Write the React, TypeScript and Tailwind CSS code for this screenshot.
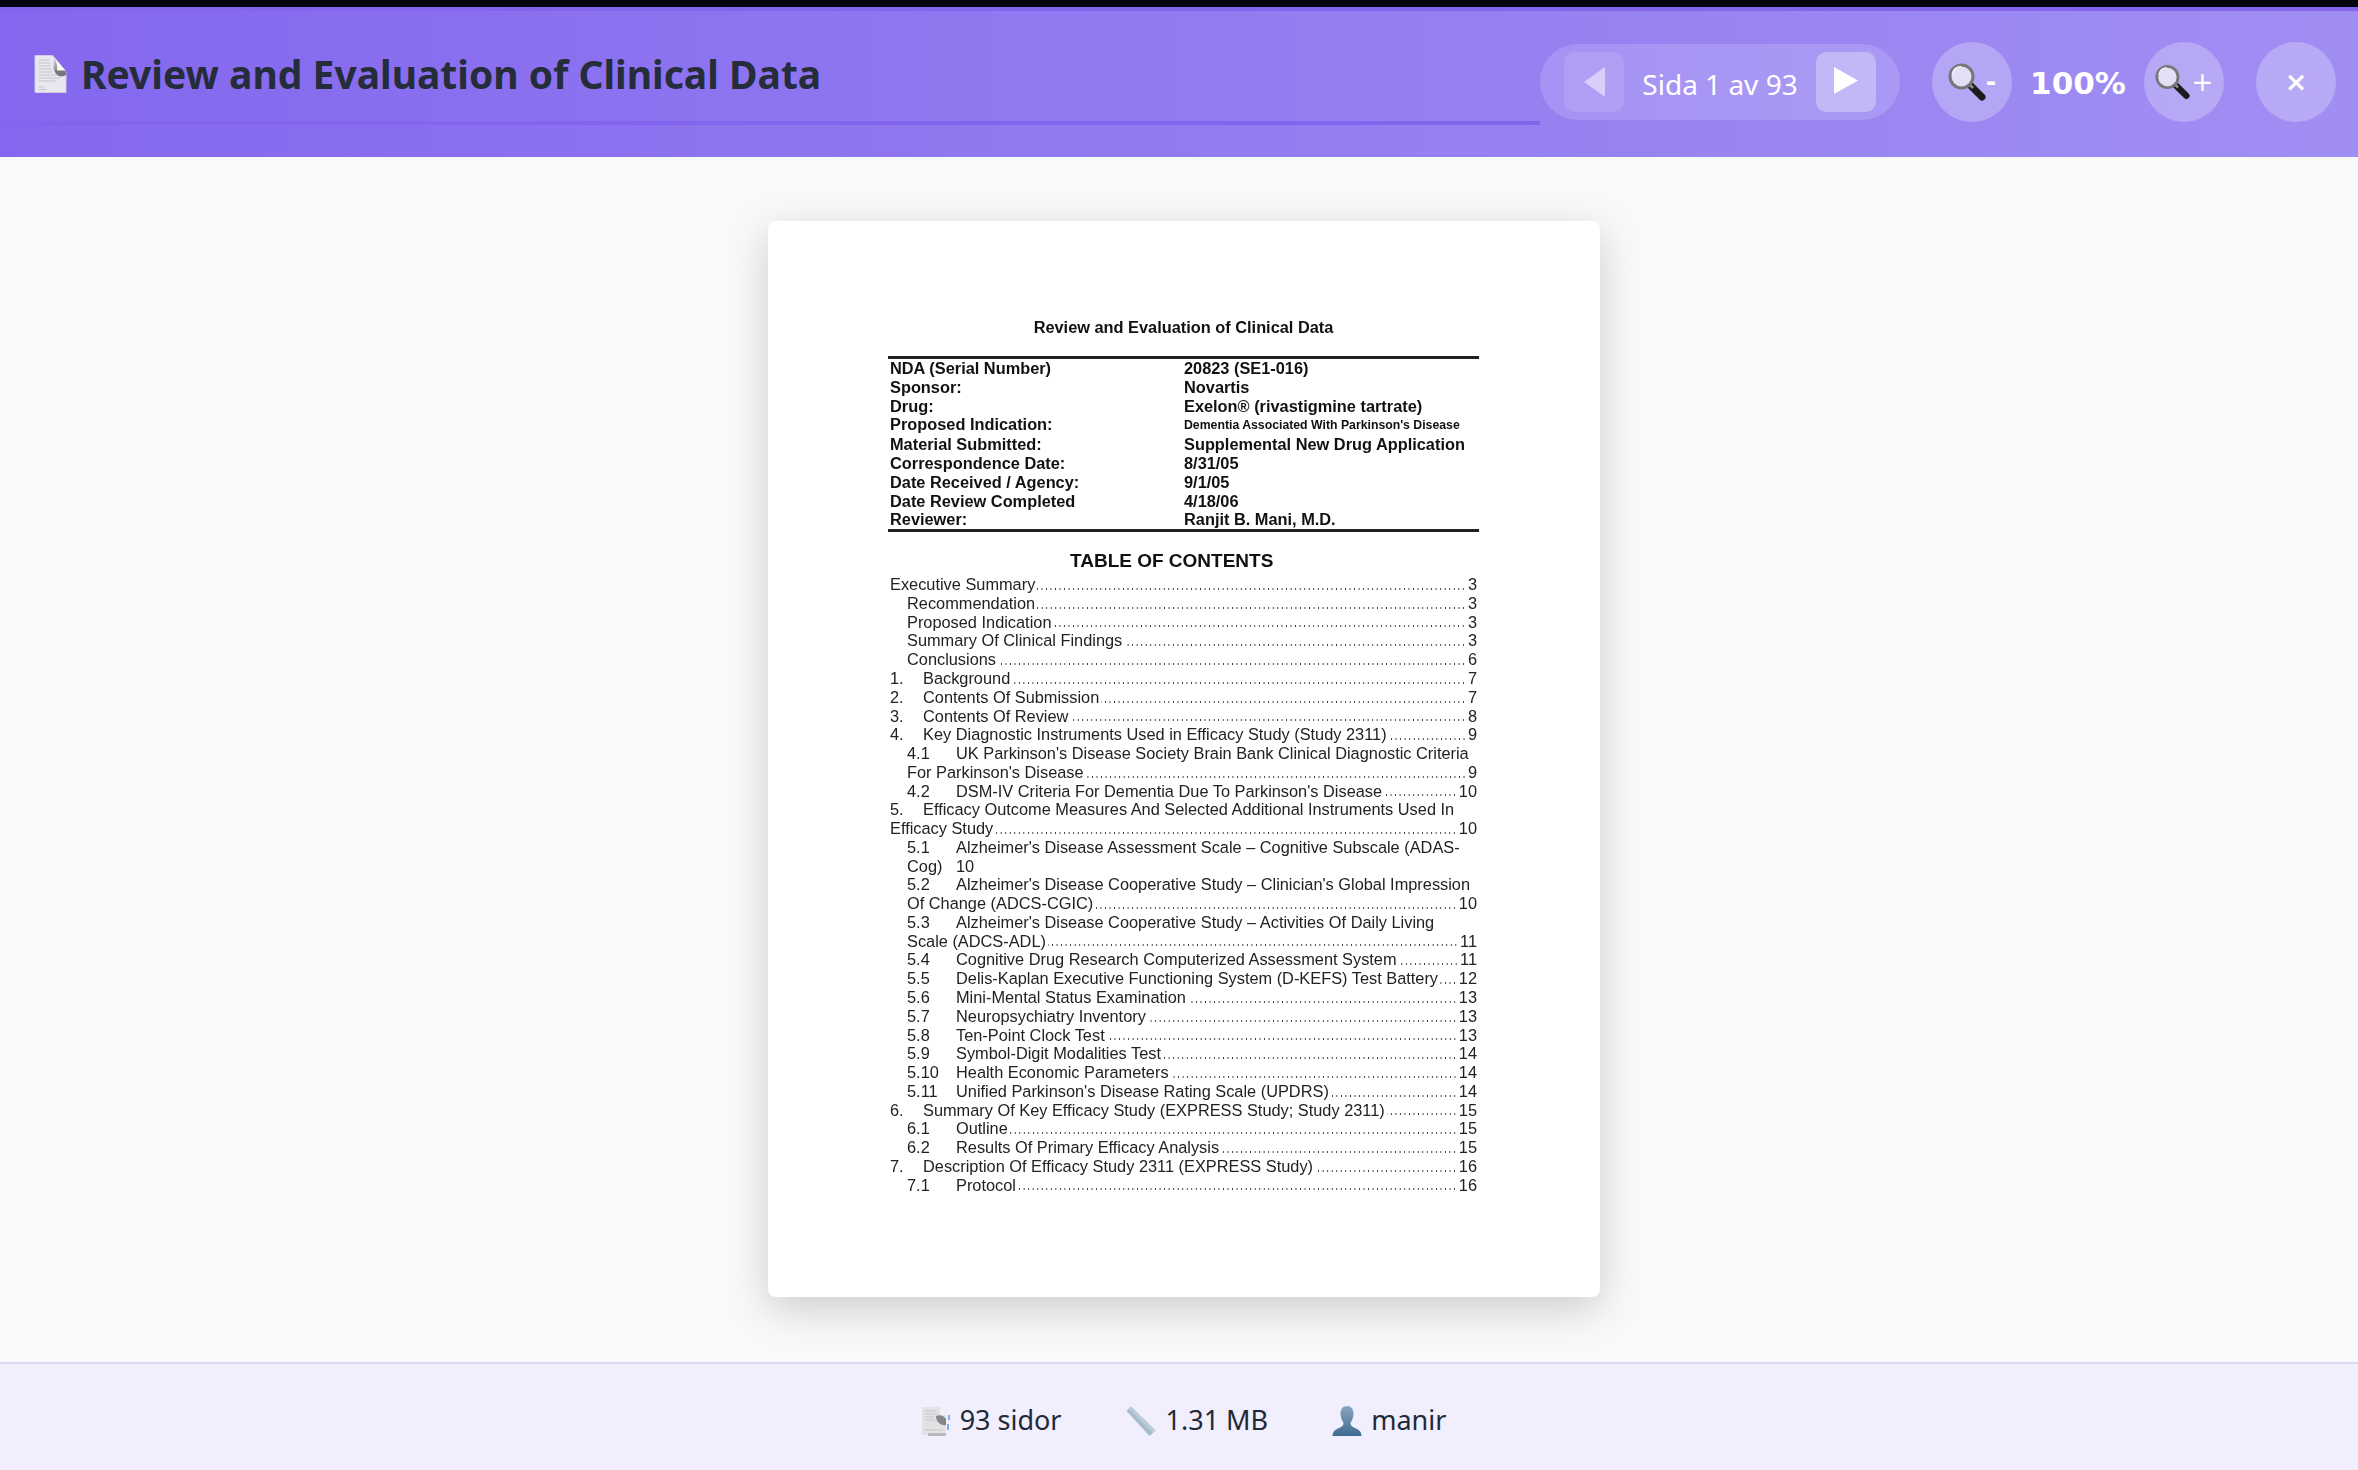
const meta = [
  ["NDA (Serial Number)", "20823 (SE1-016)"],
  ["Sponsor:", "Novartis"],
  ["Drug:", "Exelon® (rivastigmine tartrate)"],
  ["Proposed Indication:", "Dementia Associated With Parkinson's Disease"],
  ["Material Submitted:", "Supplemental New Drug Application"],
  ["Correspondence Date:", "8/31/05"],
  ["Date Received / Agency:", "9/1/05"],
  ["Date Review Completed", "4/18/06"],
  ["Reviewer:", "Ranjit B. Mani, M.D."],
];

type TocRow = { level: 0 | 1 | 2 | 3; num?: string; text: string; page?: string };

// level 0: flush left, 1: indented, 2: numbered chapter, 3: numbered sub section
const toc: TocRow[] = [
  { level: 0, text: "Executive Summary", page: "3" },
  { level: 1, text: "Recommendation", page: "3" },
  { level: 1, text: "Proposed Indication", page: "3" },
  { level: 1, text: "Summary Of Clinical Findings", page: "3" },
  { level: 1, text: "Conclusions", page: "6" },
  { level: 2, num: "1.", text: "Background", page: "7" },
  { level: 2, num: "2.", text: "Contents Of Submission", page: "7" },
  { level: 2, num: "3.", text: "Contents Of Review", page: "8" },
  { level: 2, num: "4.", text: "Key Diagnostic Instruments Used in Efficacy Study (Study 2311)", page: "9" },
  { level: 3, num: "4.1", text: "UK Parkinson's Disease Society Brain Bank Clinical Diagnostic Criteria" },
  { level: 1, text: "For Parkinson's Disease", page: "9" },
  { level: 3, num: "4.2", text: "DSM-IV Criteria For Dementia Due To Parkinson's Disease", page: "10" },
  { level: 2, num: "5.", text: "Efficacy Outcome Measures And Selected Additional Instruments Used In" },
  { level: 0, text: "Efficacy Study", page: "10" },
  { level: 3, num: "5.1", text: "Alzheimer's Disease Assessment Scale – Cognitive Subscale (ADAS-" },
  { level: 1, num: "Cog)", text: "10" },
  { level: 3, num: "5.2", text: "Alzheimer's Disease Cooperative Study – Clinician's Global Impression" },
  { level: 1, text: "Of Change (ADCS-CGIC)", page: "10" },
  { level: 3, num: "5.3", text: "Alzheimer's Disease Cooperative Study – Activities Of Daily Living" },
  { level: 1, text: "Scale (ADCS-ADL)", page: "11" },
  { level: 3, num: "5.4", text: "Cognitive Drug Research Computerized Assessment System", page: "11" },
  { level: 3, num: "5.5", text: "Delis-Kaplan Executive Functioning System (D-KEFS) Test Battery", page: "12" },
  { level: 3, num: "5.6", text: "Mini-Mental Status Examination", page: "13" },
  { level: 3, num: "5.7", text: "Neuropsychiatry Inventory", page: "13" },
  { level: 3, num: "5.8", text: "Ten-Point Clock Test", page: "13" },
  { level: 3, num: "5.9", text: "Symbol-Digit Modalities Test", page: "14" },
  { level: 3, num: "5.10", text: "Health Economic Parameters", page: "14" },
  { level: 3, num: "5.11", text: "Unified Parkinson's Disease Rating Scale (UPDRS)", page: "14" },
  { level: 2, num: "6.", text: "Summary Of Key Efficacy Study (EXPRESS Study; Study 2311)", page: "15" },
  { level: 3, num: "6.1", text: "Outline", page: "15" },
  { level: 3, num: "6.2", text: "Results Of Primary Efficacy Analysis", page: "15" },
  { level: 2, num: "7.", text: "Description Of Efficacy Study 2311 (EXPRESS Study)", page: "16" },
  { level: 3, num: "7.1", text: "Protocol", page: "16" },
];

const DocIcon = ({ className }: { className: string }) => (
  <svg viewBox="0 0 32 38" className={className}>
    <defs>
      <linearGradient id="curl" x1="0" y1="0" x2="1" y2="1">
        <stop offset="0" stopColor="#f4f4f4" />
        <stop offset="0.55" stopColor="#8f8f8f" />
        <stop offset="1" stopColor="#5f5f5f" />
      </linearGradient>
    </defs>
    <path d="M0.5 0.5H18L31.5 17V37.5H0.5Z" fill="#e9e7ef" stroke="#d0cde0" />
    <path d="M4 5h11M4 8h12M4 11h12M4 14h13M4 17h14M4 20h22M4 23h22M4 26h18M4 32h6M4 34.500h8" stroke="#c5c3cc" strokeWidth="1.200" />
    <path d="M18 1L31.500 17C27 16 21.500 18.500 19.500 15C18.500 11 20 6 18 1Z" fill="url(#curl)" />
    <path d="M18.500 1L31 15.500H22.500C23 10 22 5 18.500 1Z" fill="#f8f8f8" />
    <path d="M20 15.500L31.500 16.500V20C27 23 21 21 20 15.500Z" fill="#77767c" />
  </svg>
);

const PagesIcon = () => (
  <svg viewBox="0 0 28 30" className="w-[28px] h-[30px]">
    <path d="M0 1H17L24 9V29H0Z" fill="#e2e1e3" />
    <path d="M3 5h11M3 8h12M3 11h9M3 14h10M3 24h18" stroke="#cfcfd2" strokeWidth="1.300" />
    <path d="M14 10C18 8 22 10 24 13V19C19 20 14 16 14 10Z" fill="#86868a" />
    <path d="M17 1L24 9H19Z" fill="#f5f5f5" />
    <path d="M6 27H24V30H6Z" fill="#b9b9bc" />
    <rect x="26" y="9" width="2" height="5" fill="#7fb0ee" />
    <rect x="25" y="18" width="2" height="6" fill="#7fb0ee" />
  </svg>
);

const Magnifier = ({ className }: { className: string }) => (
  <svg viewBox="0 0 38 38" className={className}>
    <path d="M22 22L34 34" stroke="#1b1b1b" strokeWidth="7" strokeLinecap="round" />
    <path d="M21 21L25 25" stroke="#8a8a8a" strokeWidth="3" />
    <circle cx="13.500" cy="13.500" r="11.500" fill="#e3dff5" stroke="#77777a" strokeWidth="3" />
    <path d="M4 11A10 10 0 0 1 13 3.500" stroke="#f4f4f4" strokeWidth="1.500" fill="none" />
  </svg>
);

const RulerIcon = () => (
  <svg viewBox="0 0 30 30" className="w-[30px] h-[30px]">
    <path d="M5 0.500L29.500 24.500L23.500 30L0.500 5Z" fill="#a9bccc" />
    <path d="M5 0.500L29.500 24.500L27 27L2.500 2.500Z" fill="#bccbd8" />
  </svg>
);

const UserIcon = () => (
  <svg viewBox="0 0 30 30" className="w-[30px] h-[30px]">
    <defs>
      <linearGradient id="bust" x1="0" y1="0" x2="0" y2="1">
        <stop offset="0" stopColor="#8aa6c0" />
        <stop offset="1" stopColor="#3f6a90" />
      </linearGradient>
    </defs>
    <path d="M15 0C10.500 0 8.500 3.500 8.500 7.500C8.500 12 10.500 15 11.500 17C11.500 20 9 21 5 23C2 24.500 0.500 26.500 0.500 30H29.500C29.500 26.500 28 24.500 25 23C21 21 18.500 20 18.500 17C19.500 15 21.500 12 21.500 7.500C21.500 3.500 19.500 0 15 0Z" fill="url(#bust)" />
  </svg>
);

const TocLine = ({ row }: { row: TocRow }) => (
  <div className={row.level === 1 || row.level === 3 ? "flex whitespace-nowrap pl-[17px]" : "flex whitespace-nowrap"}>
    {row.num && (
      <span className={row.level === 2 ? "w-[33px] shrink-0" : "w-[49px] shrink-0"}>{row.num}</span>
    )}
    <span>{row.text}</span>
    {row.page && (
      <>
        <span className="flex-1 mx-[2px] h-[2px] self-end mb-[4px] bg-[radial-gradient(circle,#333_0.75px,transparent_1px)] bg-[length:4.54px_2px] bg-repeat-x bg-right"></span>
        <span>{row.page}</span>
      </>
    )}
  </div>
);

export default function App() {
  return (
    <div className="h-[1470px] flex flex-col bg-[#f8f9fb] font-['Noto_Sans',sans-serif] overflow-hidden">
      <div className="h-[7px] bg-[#05030c]"></div>

      <header className="h-[150px] flex border-t-4 border-[#8265ec] bg-gradient-to-r from-[#8467ee] to-[#a18ef3]">
        <div className="flex-1 h-[114px] flex items-start gap-[14px] pl-[34px] pt-[40px] border-b-4 border-[#8265ec]">
          <DocIcon className="w-[33px] h-[38px] mt-[4px]" />
          <h1 className="text-[39px] leading-[46px] font-bold text-[#252c3a] whitespace-nowrap">Review and Evaluation of Clinical Data</h1>
        </div>

        <div className="flex items-start pt-[33px] pr-[22px]">
          <div className="w-[360px] h-[76px] flex items-center justify-between px-[24px] rounded-[38px] bg-white/15 text-white text-[28px]">
            <button className="w-[60px] h-[60px] flex items-center justify-center rounded-[10px] bg-white/10">
              <svg viewBox="0 0 21 30" className="w-[21px] h-[30px]">
                <polygon points="21,0 21,30 0,15" fill="#ffffff" fillOpacity="0.5" />
              </svg>
            </button>
            <span className="pt-[4px]">Sida 1 av 93</span>
            <button className="w-[60px] h-[60px] flex items-center justify-center rounded-[10px] bg-white/30">
              <svg viewBox="0 0 24 27" className="w-[24px] h-[27px] -mt-[4px]">
                <polygon points="0,0 24,13.500 0,27" fill="#ffffff" />
              </svg>
            </button>
          </div>

          <button className="w-[80px] h-[80px] -mt-[2px] ml-[32px] flex items-center justify-center rounded-full bg-white/25 text-white text-[25px] font-['DejaVu_Sans',sans-serif]">
            <Magnifier className="w-[38px] h-[38px]" />
            <span className="font-bold">-</span>
          </button>
          <span className="w-[132px] h-[76px] pt-[2px] flex items-center justify-center text-[31px] font-bold text-white font-['DejaVu_Sans',sans-serif]">100%</span>
          <button className="w-[80px] h-[80px] -mt-[2px] flex items-center justify-center gap-[2px] rounded-full bg-white/25 text-white text-[26px] font-['DejaVu_Sans',sans-serif]">
            <Magnifier className="w-[35px] h-[36px]" />
            <span>+</span>
          </button>
          <button className="w-[80px] h-[80px] -mt-[2px] ml-[32px] flex items-center justify-center rounded-full bg-white/25 text-white text-[27px] font-bold font-['DejaVu_Sans',sans-serif]">
            ×
          </button>
        </div>
      </header>

      <main className="flex-1 flex justify-center pl-[10px] pt-[64px]">
        <div className="w-[832px] h-[1076px] pl-[122px] pr-[123px] pt-[97px] rounded-[8px] bg-white shadow-[0_12px_40px_rgba(0,0,0,0.18)] font-['Liberation_Sans',sans-serif] text-[#111] blur-[0.35px]">
          <div className="text-center text-[16.35px] leading-[19px] font-bold">Review and Evaluation of Clinical Data</div>

          <div className="mt-[19px] -mx-[2px] h-[3px] bg-[#222]"></div>
          <div className="grid grid-cols-[294px_1fr] text-[16.35px] leading-[18.8px] font-bold whitespace-nowrap">
            {meta.map(([k, v]) => (
              <div key={k} className="contents">
                <div>{k}</div>
                <div className={k === "Proposed Indication:" ? "text-[12.27px] pt-[1px]" : ""}>{v}</div>
              </div>
            ))}
          </div>
          <div className="-mx-[2px] h-[3px] bg-[#222]"></div>

          <div className="mt-[17px] ml-[180px] text-[19px] leading-[24px] font-bold whitespace-nowrap">TABLE OF CONTENTS</div>

          <div className="mt-[2px] text-[16.35px] leading-[18.77px] text-[#222]">
            {toc.map((row) => (
              <TocLine key={row.text} row={row} />
            ))}
          </div>
        </div>
      </main>

      <footer className="h-[108px] flex items-center justify-center gap-[64px] pl-[10px] pt-[7px] border-t-2 border-[#dcd8f6] bg-[#f1eefd] text-[27px] text-[#1f2937]">
        <div className="flex items-center gap-[10px]">
          <PagesIcon />
          <span>93 sidor</span>
        </div>
        <div className="flex items-center gap-[10px]">
          <RulerIcon />
          <span>1.31 MB</span>
        </div>
        <div className="flex items-center gap-[9px]">
          <UserIcon />
          <span>manir</span>
        </div>
      </footer>
    </div>
  );
}
